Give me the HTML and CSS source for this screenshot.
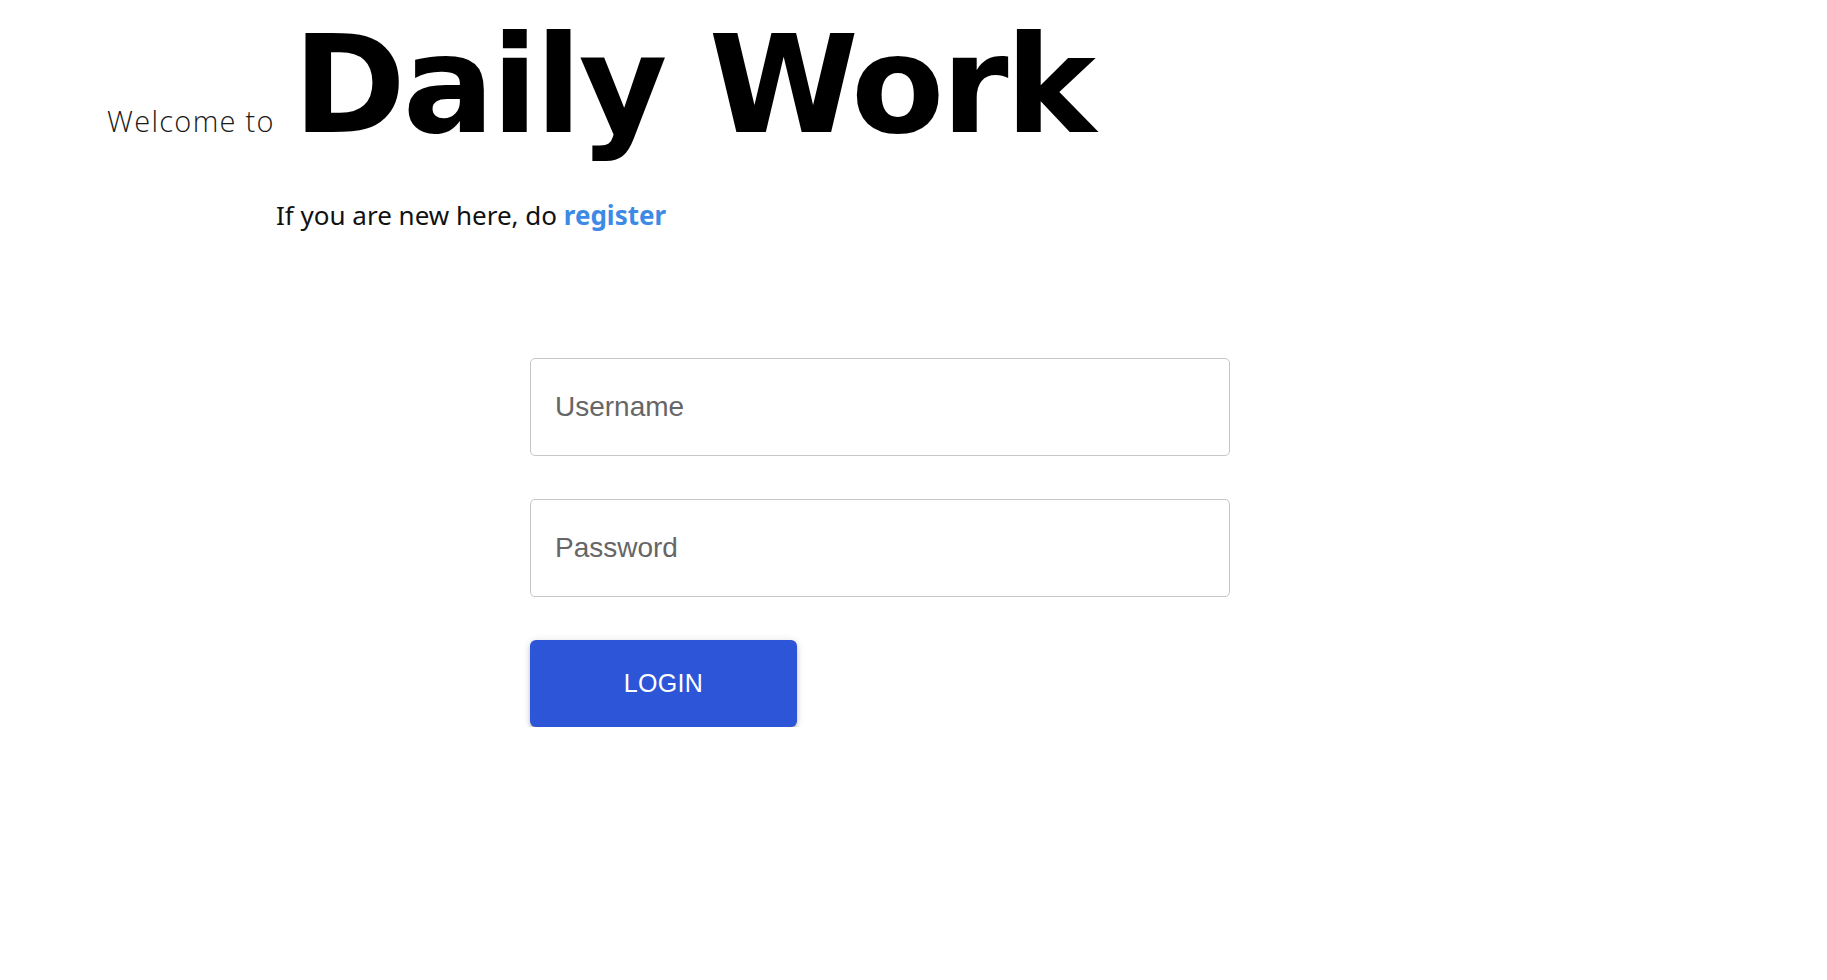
FILE: index.html
```html
<!DOCTYPE html>
<html lang="en">
<head>
<meta charset="utf-8">
<title>Daily Work</title>
<link rel="stylesheet" href="styles.css">
</head>
<body>
<main class="page">
  <header class="hero">
    <span class="welcome">Welcome to</span>
    <h1 class="brand">Daily Work</h1>
  </header>
  <p class="lead">If you are new here, do <a class="register" href="#">register</a></p>
  <form class="login">
    <input class="field" type="text" placeholder="Username">
    <input class="field" type="password" placeholder="Password">
    <button class="btn" type="button">LOGIN</button>
  </form>
</main>
</body>
</html>
```
FILE: styles.css
```css
html, body {
  margin: 0;
  padding: 0;
  background: #ffffff;
}

.page {
  display: flex;
  flex-direction: column;
}

.hero {
  display: flex;
  align-items: baseline;
  gap: 18px;
  padding: 17px 0 0 107px;
}

.welcome {
  font-family: "Open Sans", "Lato", sans-serif;
  font-weight: 300;
  font-size: 29px;
  letter-spacing: 1.3px;
  color: #1a1a1a;
}

.brand {
  margin: 0;
  font-family: "DejaVu Sans", sans-serif;
  font-weight: 700;
  font-size: 136px;
  line-height: 1;
  letter-spacing: -3px;
  color: #000000;
}

.lead {
  margin: 44px 0 0 276px;
  font-family: "Noto Sans", "Open Sans", sans-serif;
  font-size: 26px;
  color: #111111;
}

.register {
  color: #3d8ae6;
  font-weight: 700;
  text-decoration: none;
}

.login {
  display: flex;
  flex-direction: column;
  align-items: flex-start;
  gap: 43px;
  width: 700px;
  margin: 125px 0 0 530px;
}

.field {
  box-sizing: border-box;
  width: 700px;
  height: 98px;
  padding: 0 24px;
  border: 1px solid #c6c6c6;
  border-radius: 5px;
  font-family: "Liberation Sans", Arial, sans-serif;
  font-size: 28px;
  color: #333333;
  background: #ffffff;
  outline: none;
}

.field::placeholder {
  color: #666666;
}

.btn {
  width: 267px;
  height: 87px;
  border: none;
  border-radius: 6px;
  background: #2d55d7;
  color: #ffffff;
  font-family: "Liberation Sans", Arial, sans-serif;
  font-size: 25px;
  letter-spacing: 0.3px;
  box-shadow: 0 3px 3px -2px rgba(0,0,0,0.25), 0 3px 4px 0 rgba(0,0,0,0.16), 0 1px 8px 0 rgba(0,0,0,0.12);
  cursor: pointer;
}
```
